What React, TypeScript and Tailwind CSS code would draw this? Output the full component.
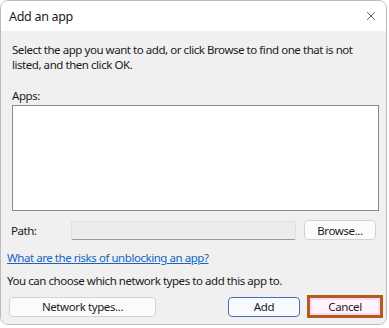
import { X } from "lucide-react";

const FONT = "font-['Segoe_UI','Noto_Sans',sans-serif]";

function Button({ label, className = "" }: { label: string; className?: string }) {
  return (
    <button
      type="button"
      className={`flex h-[20px] items-center justify-center rounded-[4px] border text-[11.5px] tracking-[-0.4px] text-[#1b1b1b] ${className}`}
    >
      {label}
    </button>
  );
}

export default function App() {
  return (
    <div className={`h-[328px] w-[389px] bg-white ${FONT}`}>
      <div className="flex h-[325px] w-[387px] flex-col overflow-hidden rounded-[8px] border border-[#bcbcbc]">
        {/* title bar */}
        <div className="flex h-[30px] shrink-0 items-center justify-between bg-white pl-[8px] pr-[8px]">
          <span className="pt-[2px] text-[12.5px] tracking-[-0.3px] text-[#1a1a1a]">Add an app</span>
          <X className="h-[14px] w-[14px] text-[#222]" strokeWidth={1.3} />
        </div>

        <div className="flex flex-1 flex-col bg-[#f0f0f0] text-[11.5px] leading-[15px] tracking-[-0.45px] text-[#1b1b1b]">
          <p className="ml-[11px] mr-[10px] mt-[11px]">
            Select the app you want to add, or click Browse to find one that is not listed, and then click OK.
          </p>

          <div className="ml-[11px] mt-[16px]">Apps:</div>
          <div className="ml-[11px] mt-[2px] h-[106px] w-[367px] border border-[#8a8a8a] bg-white" />

          <div className="ml-[10px] mt-[9px] flex items-center">
            <span className="w-[60px]">Path:</span>
            <div className="h-[19px] w-[225px] rounded-[2px] border border-[#e0e0e0] border-b-[#9a9a9a] bg-[#ececec]" />
            <Button label="Browse..." className="ml-[8px] w-[72px] border-[#d3d3d3] bg-[#fbfbfb]" />
          </div>

          <a className="ml-[6px] mt-[10px] text-[#1464c0] underline" href="#">
            What are the risks of unblocking an app?
          </a>

          <div className="ml-[6px] mt-[8px]">You can choose which network types to add this app to.</div>

          <div className="mt-[7px] flex items-center">
            <Button label="Network types..." className="ml-[8px] w-[147px] border-[#d3d3d3] bg-[#fbfbfb]" />
            <Button label="Add" className="ml-[72px] w-[72px] border-[#4b6db0] bg-[#f7faff]" />
            <div className="ml-[7px] h-[23px] w-[76px] border-[3px] border-[#b35a1c] bg-[#ffd9f6] p-[2px]">
              <div className="flex h-full w-full items-center justify-center bg-[#fff3fd] text-[11.5px] tracking-[-0.4px] text-[#1b1b1b]">
                Cancel
              </div>
            </div>
          </div>
        </div>
      </div>
    </div>
  );
}
